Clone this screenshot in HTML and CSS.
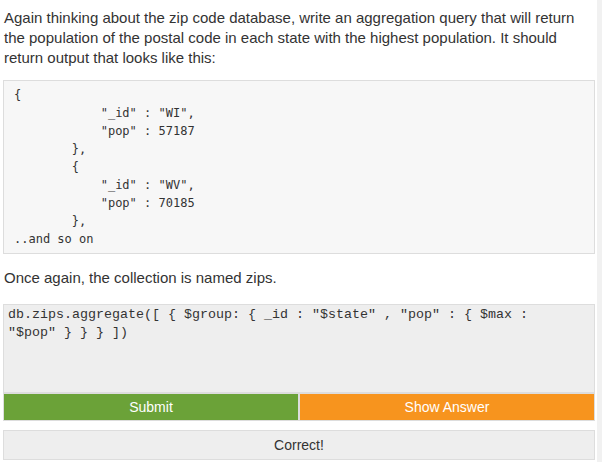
FILE: index.html
```html
<!DOCTYPE html>
<html>
<head>
<meta charset="utf-8">
<link rel="stylesheet" href="styles.css">
</head>
<body>
<div class="page">
  <main class="content">
    <p class="question">Again thinking about the zip code database, write an aggregation query that will return the population of the postal code in each state with the highest population. It should return output that looks like this:</p>
<pre class="sample">{
            "_id" : "WI",
            "pop" : 57187
        },
        {
            "_id" : "WV",
            "pop" : 70185
        },
..and so on</pre>
    <p class="note">Once again, the collection is named zips.</p>
    <textarea class="answer">db.zips.aggregate([ { $group: { _id : "$state" , "pop" : { $max : "$pop" } } } ])</textarea>
    <div class="actions">
      <button class="btn btn-submit">Submit</button>
      <button class="btn btn-show">Show Answer</button>
    </div>
    <div class="result">Correct!</div>
  </main>
  <div class="scrollbar"></div>
</div>
</body>
</html>
```

FILE: styles.css
```css
html, body {
  margin: 0;
  padding: 0;
  background: #fff;
}

.page {
  display: flex;
  min-height: 100vh;
}

.content {
  flex: 1;
  padding: 0 2px 0 3px;
  min-width: 0;
  font-family: "Liberation Sans", Arial, sans-serif;
  font-size: 15px;
  color: #333;
}

.scrollbar {
  width: 5px;
  background: #f1f1f1;
}

.question {
  margin: 8px 0 0 1px;
  line-height: 20px;
}

.sample {
  margin: 12px 0 0;
  padding: 5px 10px;
  background: #f7f7f7;
  border: 1px solid #ddd;
  font-family: "DejaVu Sans Mono", monospace;
  font-size: 12px;
  line-height: 18px;
  color: #333;
}

.note {
  margin: 14px 0 0 1px;
  line-height: 20px;
}

.answer {
  display: block;
  box-sizing: border-box;
  width: 100%;
  height: 89px;
  margin: 16px 0 0;
  padding: 1px 12px 1px 4px;
  background: #eee;
  border: 1px solid #ddd;
  font-family: "Liberation Mono", "Courier New", monospace;
  font-size: 13.33px;
  line-height: 17.5px;
  color: #333;
  resize: none;
  overflow: hidden;
}

.actions {
  display: grid;
  grid-template-columns: 1fr 1fr;
}

.btn {
  height: 28px;
  margin: 0;
  padding: 0;
  border: 1px solid #ddd;
  font-family: "Liberation Sans", Arial, sans-serif;
  font-size: 14px;
  color: #fff;
  cursor: pointer;
}

.btn-submit {
  background: #6ba238;
}

.btn-show {
  background: #f7941e;
}

.result {
  box-sizing: border-box;
  height: 30px;
  margin-top: 9px;
  border: 1px solid #ddd;
  background: #eee;
  display: flex;
  align-items: center;
  justify-content: center;
  font-size: 14px;
  color: #333;
}
```
